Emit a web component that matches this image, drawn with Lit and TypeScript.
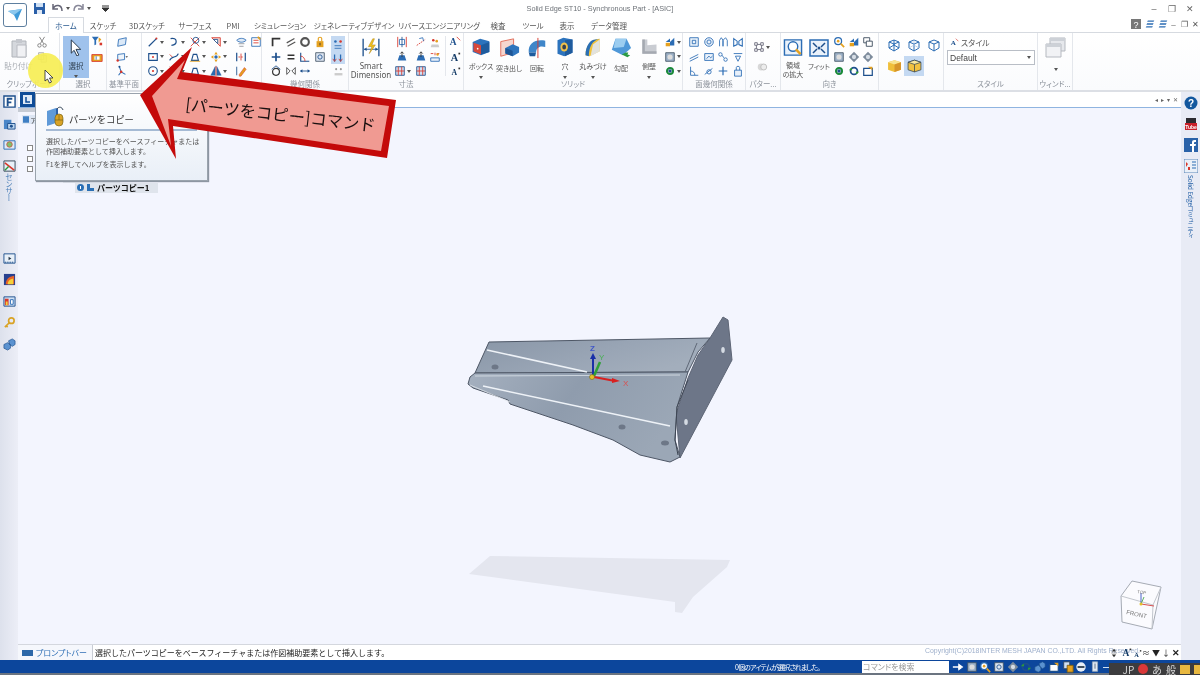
import { LitElement, html, css, svg } from "lit";
import { customElement } from "lit/decorators.js";

const B = "#2b6cb4";
const D = "#1d4f8c";
const O = "#e5a11f";
const G = "#8d939c";
const R = "#d8382c";

// 14x14 glyphs for the small ribbon buttons
const I: Record<string, any> = {
  cut: svg`<path d="M4 1l5 8M10 1L5 9" stroke="#777" fill="none"/><circle cx="4" cy="11" r="2" fill="none" stroke="#777"/><circle cx="10" cy="11" r="2" fill="none" stroke="#777"/>`,
  copy: svg`<path d="M3 2h6v8H3zM6 5h6v8H6z" fill="#eee" stroke="#aaa"/>`,
  filter: svg`<path d="M1 2h8L6 6v5L4 12V6z" fill="${B}"/><path d="M9 3l3 2-3 4z" fill="${O}"/><path d="M10 9h3v3h-3z" fill="${R}"/>`,
  select2: svg`<path d="M1 3h12v8H1z" fill="${O}" stroke="${R}"/><path d="M4 5h6v4H4z" fill="#fff"/><path d="M6 5v4" stroke="${B}"/>`,
  plane1: svg`<path d="M3 4l9-2-1 8-9 2z" fill="#dbe9f8" stroke="${B}"/>`,
  plane2: svg`<path d="M2 4l8-1v7l-8 1z" fill="#eef4fb" stroke="${B}"/><circle cx="2" cy="11" r="1.4" fill="${R}"/><path d="M11 6l3 0-1.500 2z" fill="#444"/>`,
  plane3: svg`<path d="M4 2l2 6 5 3M6 8L3 12" stroke="${B}" fill="none" stroke-width="1.200"/><circle cx="6" cy="8" r="1.500" fill="${R}"/><circle cx="4" cy="2" r="1.200" fill="${D}"/>`,
  line: svg`<path d="M2 12L11 3" stroke="${D}" stroke-width="1.400"/><circle cx="11" cy="3" r="1.200" fill="${R}"/>`,
  arc: svg`<path d="M3 3c8-2 9 7 1 8" fill="none" stroke="${D}" stroke-width="1.400"/>`,
  fillet: svg`<path d="M2 11c2-6 8-2 10-8" fill="none" stroke="${D}" stroke-width="1.400"/><path d="M2 4l3 3" stroke="${R}"/>`,
  rect: svg`<path d="M2 3h10v8H2z" fill="none" stroke="${D}" stroke-width="1.300"/><circle cx="7" cy="7" r="1.200" fill="${R}"/>`,
  circle: svg`<circle cx="7" cy="7" r="5" fill="none" stroke="${D}" stroke-width="1.300"/><circle cx="7" cy="7" r="1.300" fill="${R}"/>`,
  trim: svg`<path d="M2 2l10 10M12 2L2 12" stroke="${R}"/><circle cx="8" cy="5" r="3.500" fill="none" stroke="${D}"/>`,
  project: svg`<path d="M3 11h8L9 4H5z" fill="none" stroke="${D}" stroke-width="1.300"/><path d="M1 12h12" stroke="${O}"/>`,
  corner: svg`<path d="M2 2h10v10z" fill="#f6d9d2" stroke="${R}"/><path d="M4 4h5v5z" fill="#fff" stroke="${D}"/>`,
  move: svg`<path d="M7 1l2 3H5zM7 13l2-3H5zM1 7l3-2v4zM13 7l-3-2v4z" fill="${O}"/><circle cx="7" cy="7" r="2" fill="${B}"/>`,
  mirror: svg`<path d="M6 2v10L1 12zM8 2v10l5 0z" fill="${B}" stroke="${D}" stroke-width=".5"/><path d="M7 1v12" stroke="${R}"/>`,
  eye: svg`<path d="M2 5c3-3 8-3 11 0-3 3-8 3-11 0z" fill="#dfeaf6" stroke="${B}"/><path d="M4 9h7M5 12h5" stroke="${G}"/>`,
  grid: svg`<path d="M2 2h10v10H2z" fill="#fff" stroke="${B}"/><path d="M4 5h6M4 8h6" stroke="${R}"/><path d="M9 1l3 3" stroke="${O}" stroke-width="2"/>`,
  dim: svg`<path d="M2 2v10M12 2v10" stroke="${D}" stroke-width="1.400"/><path d="M4 7h6" stroke="${R}" stroke-dasharray="2 1"/><path d="M7 3v8" stroke="${R}"/>`,
  pencil: svg`<path d="M2 2v10" stroke="${D}"/><path d="M5 11l6-8 2 2-6 8H5z" fill="${O}" stroke="${R}" stroke-width=".6"/>`,
  perp: svg`<path d="M3 12V3h9" fill="none" stroke="#333" stroke-width="2"/>`,
  para: svg`<path d="M2 8l9-5M3 12l9-5" stroke="#555" stroke-width="1.400"/>`,
  ring: svg`<circle cx="7" cy="7" r="4.500" fill="none" stroke="#555" stroke-width="2.400"/>`,
  lock: svg`<path d="M3 6h8v7H3z" fill="${O}"/><path d="M5 6V3c0-2 4-2 4 0v3" fill="none" stroke="${O}" stroke-width="1.300"/><path d="M7 8v3" stroke="#333"/>`,
  cross: svg`<path d="M7 2v10M2 7h10" stroke="${D}" stroke-width="2"/>`,
  equal: svg`<path d="M3 5h8M3 9h8" stroke="#333" stroke-width="1.800"/>`,
  ang: svg`<path d="M2 2v10h10" fill="none" stroke="${D}" stroke-width="1.300"/><path d="M2 6c3 0 5 3 5 6" fill="none" stroke="${R}"/>`,
  tgt: svg`<path d="M2 2h10v10H2z" fill="#dde6f2" stroke="#456"/><circle cx="7" cy="7" r="2.500" fill="none" stroke="${D}"/>`,
  tan: svg`<circle cx="7" cy="8" r="4" fill="none" stroke="#333" stroke-width="1.400"/><path d="M2 5l5-4 5 4" fill="none" stroke="${D}"/>`,
  sym: svg`<path d="M2 3l4 4-4 4zM12 3L8 7l4 4z" fill="none" stroke="#444"/>`,
  dist: svg`<path d="M2 7h10" stroke="${D}"/><path d="M1 7l3-2v4zM13 7l-3-2v4z" fill="${D}"/>`,
  rel1: svg`<circle cx="4" cy="4" r="1.500" fill="${B}"/><circle cx="10" cy="4" r="1.500" fill="${R}"/><path d="M3 9l8 0M3 12l8 0" stroke="${B}"/>`,
  rel2: svg`<path d="M3 3v8M10 3v8" stroke="${B}" stroke-width="1.500"/><path d="M1 8l2 3 2-3M8 8l2 3 2-3" fill="none" stroke="${R}"/>`,
  rel3: svg`<path d="M3 10h8l1 3H2z" fill="#ccc"/><circle cx="5" cy="5" r="1.500" fill="${R}"/><circle cx="9" cy="6" r="1.500" fill="${O}"/>`,
  relG: svg`<circle cx="4" cy="4" r="1.300" fill="#999"/><circle cx="10" cy="4" r="1.300" fill="#999"/><path d="M2 9h10v3H2z" fill="#ccc"/>`,
  dimA: svg`<path d="M2 1v12M12 1v12" stroke="${R}"/><path d="M4 4h6v6H4z" fill="none" stroke="${B}"/><path d="M7 1v12" stroke="${D}"/>`,
  dimB: svg`<path d="M2 11l10-7" stroke="${R}" stroke-dasharray="2 1"/><path d="M5 3l4-1 1 4" fill="none" stroke="${B}"/>`,
  dimC: svg`<path d="M2 3h3M9 3h3M7 2v3" stroke="${R}"/><path d="M2 8h10v4H2z" fill="#e8f0fa" stroke="${B}"/><circle cx="10" cy="4" r="1.400" fill="${O}"/>`,
  dimD: svg`<path d="M2 11h10l-2-6H4z" fill="${B}"/><path d="M7 1v6" stroke="#333"/><path d="M5 3l2-2 2 2" fill="none" stroke="#333"/>`,
  dimE: svg`<path d="M2 2h10v10H2z" fill="#cfe0f4" stroke="${D}"/><path d="M5 2v10M9 2v10M2 7h10" stroke="${R}"/>`,
  txA: svg`<text x="1" y="11" font-size="11" font-weight="700" font-family="Liberation Serif" fill="${D}">A</text><path d="M9 1l4 4" stroke="${R}"/>`,
  txB: svg`<text x="2" y="12" font-size="12" font-weight="700" font-family="Liberation Serif" fill="#123a66">A</text><path d="M11 2h2v2h-2z" fill="#333"/>`,
  txC: svg`<text x="3" y="12" font-size="9" font-weight="700" font-family="Liberation Serif" fill="#123a66">A</text><path d="M11 3h2v2h-2z" fill="#333"/>`,
  fa: svg`<path d="M2 2h10v10H2z" fill="#eaf2fb" stroke="${B}"/><path d="M5 5h4v4H5z" fill="none" stroke="${B}"/>`,
  fb: svg`<circle cx="7" cy="7" r="5" fill="#e8f0fa" stroke="${B}"/><circle cx="7" cy="7" r="2.400" fill="none" stroke="${B}"/>`,
  fc: svg`<path d="M3 12V5l2-3 2 3v7M7 12V5l3-3 2 3v7" fill="none" stroke="${B}"/>`,
  fd: svg`<path d="M2 3l4 3v4l-4 2zM12 3L8 6v4l4 2z" fill="none" stroke="${B}" stroke-width="1.200"/>`,
  fe: svg`<path d="M2 9l10-5M2 12l10-5" stroke="${B}"/>`,
  ff: svg`<path d="M2 3h10v8H2z" fill="#eaf2fb" stroke="${B}"/><path d="M4 9l3-3 2 2 2-2" fill="none" stroke="${B}"/>`,
  fg: svg`<circle cx="4" cy="4" r="2" fill="none" stroke="${B}"/><circle cx="10" cy="10" r="2" fill="none" stroke="${B}"/><path d="M6 5l2 3" stroke="${B}"/>`,
  fh: svg`<path d="M2 3h10M4 6h6l-3 6z" fill="none" stroke="${B}"/>`,
  fi: svg`<path d="M3 2v10h9" fill="none" stroke="${B}"/><path d="M3 7c3 0 5 2 5 5" fill="none" stroke="${B}"/>`,
  fj: svg`<path d="M2 11l9-7" stroke="${B}"/><circle cx="7" cy="8" r="2.500" fill="none" stroke="${B}"/>`,
  fk: svg`<path d="M7 2v10M2 7h10" stroke="${B}" stroke-width="1.400"/>`,
  fl: svg`<path d="M3 6h8v7H3z" fill="#e8f0fa" stroke="${B}"/><path d="M5 6V3c0-2 4-2 4 0v3" fill="none" stroke="${B}"/>`,
  pat: svg`<path d="M2 2h3v3H2zM9 2h3v3H9zM2 9h3v3H2zM9 9h3v3H9z" fill="none" stroke="#667"/><path d="M5 4h4M4 5v4M10 5v4M5 10h4" stroke="#667"/>`,
  patB: svg`<circle cx="6" cy="7" r="4" fill="#d8d8d8"/><circle cx="9" cy="7" r="3.500" fill="#ececec" stroke="#bbb"/>`,
  zoom: svg`<circle cx="6" cy="6" r="4" fill="#fff" stroke="${B}" stroke-width="1.500"/><path d="M9 9l4 4" stroke="${O}" stroke-width="2"/><circle cx="6" cy="6" r="1.500" fill="${O}"/>`,
  shade: svg`<path d="M2 7l5-4v4zM7 7l5-5v9H7z" fill="${B}"/><path d="M2 8h5v4H2z" fill="${O}"/>`,
  windows: svg`<path d="M2 2h7v6H2z" fill="#fff" stroke="#345"/><path d="M5 6h7v6H5z" fill="#fff" stroke="#345"/>`,
  view: svg`<path d="M2 2h10v10H2z" fill="#9fb3c9" stroke="#456"/><circle cx="7" cy="7" r="3" fill="#ddd"/>`,
  spin: svg`<path d="M3 7a4 4 0 0 1 8 0 4 4 0 0 1-8 0" fill="none" stroke="${D}" stroke-width="2"/><path d="M1 6l3-3 1 3zM13 8l-3 3-1-3z" fill="#2e9a3a"/>`,
  gear: svg`<path d="M7 1l6 6-6 6-6-6z" fill="#7d8b9b"/><circle cx="7" cy="7" r="2.500" fill="#d6dde5"/>`,
  rotate: svg`<circle cx="7" cy="7" r="3.500" fill="none" stroke="#1a8a3a" stroke-width="2.400"/><circle cx="7" cy="7" r="2" fill="${D}"/>`,
  flag: svg`<path d="M2 4h10v8H2z" fill="#fff" stroke="${D}" stroke-width="1.400"/><path d="M7 2l5 0 0 4z" fill="${O}"/>`,
  cubeA: svg`<path d="M2 4l5-2 5 2v6l-5 3-5-3zM2 4l5 2 5-2M7 6v7M7 2v5M2 10l5-3 5 3" fill="none" stroke="${B}"/>`,
  cubeB: svg`<path d="M2 4l5-2 5 2v6l-5 3-5-3zM2 4l5 2 5-2M7 6v7" fill="none" stroke="${B}"/><path d="M2 10l5-3 5 3M7 2v5" fill="none" stroke="#a9c3e2" stroke-width=".7"/>`,
  cubeC: svg`<path d="M2 4l5-2 5 2v6l-5 3-5-3zM2 4l5 2 5-2M7 6v7" fill="none" stroke="${B}"/>`,
  cubeD: svg`<path d="M1 4l6-2 6 2v7l-6 2-6-2z" fill="#f0bf3a"/><path d="M1 4l6 2 6-2-6-2z" fill="#f8e390"/><path d="M7 6l6-2v7l-6 2z" fill="#d7952a"/>`,
  cubeE: svg`<path d="M1 4l6-2 6 2v7l-6 2-6-2z" fill="#f2c241" stroke="#345" stroke-width=".7"/><path d="M1 4l6 2 6-2-6-2z" fill="#f9e89b" stroke="#345" stroke-width=".7"/><path d="M7 6v7" stroke="#345" stroke-width=".7"/>`,
  stack: svg`<path d="M4 2h9l-1 2H3zM3 6h9l-1 2H2zM2 10h9l-1 2H1z" fill="${B}"/>`,
  hF: svg`<path d="M1 1h12v12H1z" fill="#fff" stroke="${D}" stroke-width="1.500"/><path d="M4 3h6v2H6v2h3v2H6v3H4z" fill="${D}"/>`,
  hB: svg`<path d="M1 3h8v10H1z" fill="#4a86c8"/><path d="M5 7h8v6H5z" fill="#bcd6f0" stroke="${D}"/><circle cx="9" cy="10" r="1.600" fill="${D}"/>`,
  hC: svg`<path d="M1 3h12v9H1z" fill="#dfeaf6" stroke="${B}"/><circle cx="7" cy="7" r="3" fill="#7fbf6f" stroke="${R}" stroke-width=".7"/>`,
  hD: svg`<path d="M1 1h12v11H1z" fill="#e8f0f8" stroke="#345"/><path d="M2 3l10 8" stroke="${R}" stroke-width="1.800"/><path d="M2 11l4-4" stroke="#2e9a3a" stroke-width="1.500"/>`,
  hE: svg`<path d="M1 2h12v10H1z" fill="#e8f0f8" stroke="${D}"/><path d="M6 5l3 2-3 2z" fill="#234"/><path d="M2 11h10" stroke="${D}" stroke-dasharray="1.500 1"/>`,
  hF2: svg`<path d="M1 1h12v12H1z" fill="#27408f"/><path d="M3 12c0-5 3-8 9-9v9z" fill="#e8622a"/><path d="M5 12c0-3 2-5 6-6v6z" fill="#f4d13a"/>`,
  hG: svg`<path d="M1 2h12v10H1z" fill="#cfe0f4" stroke="${D}"/><path d="M2 4h4v7H2z" fill="#d8382c"/><path d="M3 7h2v4H3z" fill="#f4d13a"/><path d="M8 5h3v5H8z" fill="#fff" stroke="${B}"/>`,
  hKey: svg`<circle cx="9" cy="5" r="3" fill="none" stroke="#d9a326" stroke-width="1.800"/><path d="M7 7l-5 5M3 10l2 2" stroke="#d9a326" stroke-width="1.800"/>`,
  hParts: svg`<path d="M1 7l4-2 3 2v4l-3 2-4-2zM6 3l4-2 3 2v4l-3 2-3-2z" fill="#5a92d0" stroke="${D}" stroke-width=".7"/>`,
  help: svg`<circle cx="7" cy="7" r="6.500" fill="#12579e"/><text x="7" y="10.500" text-anchor="middle" font-size="10" font-weight="700" font-family="Liberation Sans" fill="#fff">?</text>`,
  yt: svg`<path d="M1 6h12v7H1z" fill="#c8202a"/><path d="M2 1h10v5H2z" fill="#2b2b30"/><text x="7" y="11.500" text-anchor="middle" font-size="5" font-weight="700" font-family="Liberation Sans" fill="#fff">Tube</text>`,
  fbk: svg`<path d="M0 0h14v14H0z" fill="#2a62a8"/><path d="M8 14V8H6V6h2V4c0-2 2-2 4-2v2c-2 0-2 0-2 2h2l-.4 2H10v6z" fill="#fff"/>`,
  comm: svg`<path d="M0 0h14v14H0z" fill="#eaf0f8" stroke="#5b86b8"/><path d="M2 3l2 2-2 3zM4 8h2v3H4z" fill="${R}"/><path d="M8 3h4M8 6h4M8 9h4" stroke="${B}"/>`,
  rarrow: svg`<path d="M1 7h8M8 4l4 3-4 3z" stroke="#fff" fill="#fff" stroke-width="1.500"/>`,
  minus: svg`<circle cx="7" cy="7" r="5.500" fill="#e8eef6"/><path d="M3 7h8" stroke="#234" stroke-width="2"/>`,
  docs: svg`<path d="M2 1h7v8H2z" fill="#cfe0f4" stroke="#345"/><path d="M6 5h7v8H6z" fill="${O}" stroke="#7a5c10"/>`,
  slider: svg`<path d="M4 1h6v11H4z" fill="#dfe8f4" stroke="#9ab"/><path d="M7 3v6" stroke="#567"/>`,
  updown: svg`<path d="M7 1l3 4H4zM7 13l3-4H4z" fill="#333"/><path d="M3 7h8" stroke="#888"/>`,
};

const icon = (n: string, s = 12) =>
  html`<svg class="ic" width=${s} height=${s} viewBox="0 0 14 14">${I[n]}</svg>`;

const caret = html`<i class="caret"></i>`;

type Big = { label: string; lines?: number; draw: any };

const SOLIDS: Big[] = [
  { label: "ボックス", lines: 2, draw: svg`<path d="M2 6l9-4 11 3v13l-10 4-10-4z" fill="#2c73bd"/><path d="M3 7l9 3v11l-9-4z" fill="#d6483c"/><path d="M12 10l10-4v12l-10 3z" fill="#1f5b9d"/><circle cx="8" cy="14" r="1" fill="#ffe"/>` },
  { label: "突き出し", draw: svg`<path d="M3 5l14-3v15L3 21z" fill="#f6d6cf" stroke="#e06a58"/><path d="M8 12l8-4 7 3v6l-7 4-8-3z" fill="#2f75bd"/><path d="M8 12l8 3v6l-8-3z" fill="#1e5696"/>` },
  { label: "回転", draw: svg`<path d="M3 17C2 7 10 2 21 4v7c-6-2-10 1-10 6z" fill="#3f86c9"/><path d="M3 17h8l-1 4H4z" fill="#1f5b9d"/><path d="M13 1v22" stroke="#d8382c"/>` },
  { label: "穴", lines: 2, draw: svg`<path d="M3 4l7-3 11 2v16l-10 4-8-3z" fill="#2c73bd"/><path d="M12 4l9-1v16l-9 4z" fill="#1f5b9d"/><ellipse cx="11" cy="12" rx="4.500" ry="5.500" fill="#f0c14a"/><ellipse cx="11" cy="12" rx="2.300" ry="3" fill="#35404f"/>` },
  { label: "丸みづけ", lines: 2, draw: svg`<path d="M3 22C3 10 9 3 20 2v15L8 23z" fill="#f0c23c"/><path d="M3 22C3 10 9 3 15 3l5-1C11 4 7 12 7 23z" fill="#2a6fb5"/><path d="M12 9l8-6v14l-11 6z" fill="#e0e6ee" fill-opacity=".9"/>` },
  { label: "勾配", draw: svg`<path d="M6 2h12l5 10-9 8-12-6z" fill="#4f98d8"/><path d="M6 2h12l-3 9-11 1z" fill="#9ccdf0"/><path d="M13 19l6 3 3-2-3-1 1-2-3 0z" fill="#2b9a45"/>` },
  { label: "側壁", lines: 2, draw: svg`<path d="M4 3h6v7l11-1v11H4z" fill="#c9ccd2"/><path d="M4 3h3v17H4zM4 17h17v3H4z" fill="#a5a9b1"/>` },
];

@customElement("app-root")
export class AppRoot extends LitElement {
  static styles = css`
    :host {
      display: block;
      width: 1200px;
      height: 675px;
      font-family: "Noto Sans CJK JP", "Noto Sans", sans-serif;
      font-feature-settings: "palt";
      color: #444;
      --blue: #0c469c;
    }

    * {
      box-sizing: border-box;
    }

    .app {
      position: relative;
      width: 1200px;
      height: 675px;
      overflow: hidden;
      display: flex;
      flex-direction: column;
      background: #fff;
      filter: blur(0.35px);
    }

    .ic {
      display: block;
      flex: none;
    }

    .caret {
      display: block;
      width: 0;
      height: 0;
      border: 2px solid transparent;
      border-top: 3px solid #555;
      border-bottom: 0;
      flex: none;
    }

    /* header */
    .header {
      display: flex;
      height: 33px;
      flex: none;
      border-bottom: 1px solid #d6dae0;
    }

    .appbtn {
      width: 24px;
      height: 24px;
      margin: 3px 7px 0 3px;
      border: 1px solid #5e7f9f;
      border-radius: 3px;
      background: #fff;
      display: flex;
      align-items: center;
      justify-content: center;
      flex: none;
    }

    .headright {
      flex: 1;
      display: flex;
      flex-direction: column;
      min-width: 0;
    }

    .titlerow {
      height: 16px;
      display: flex;
      align-items: center;
    }

    .quick {
      display: flex;
      align-items: center;
      width: 300px;
    }

    .title {
      width: 532px;
      text-align: center;
      font: 7.300px "Liberation Sans", sans-serif;
      color: #6d7278;
      padding-top: 1px;
    }

    .winctl {
      margin-left: auto;
      display: flex;
      padding: 2px 1px 0 0;
      font: 9px "Liberation Sans", sans-serif;
      color: #666;
    }

    .winctl span {
      width: 18px;
      text-align: center;
    }

    .tabrow {
      flex: 1;
      display: flex;
      align-items: flex-end;
      padding-left: 14px;
    }

    .tab {
      height: 16px;
      display: flex;
      align-items: center;
      justify-content: center;
      font-size: 7.5px;
      color: #555;
      white-space: nowrap;
      margin-bottom: -1px;
      flex: none;
    }

    .tab.on {
      background: #fff;
      border: 1px solid #d6dae0;
      border-bottom: 0;
      color: #2a5a90;
      margin-right: 4px;
    }

    .rightctl {
      margin-left: auto;
      display: flex;
      align-items: center;
      height: 14px;
      margin-bottom: 1px;
      font: 8px "Liberation Sans", sans-serif;
      color: #555;
    }

    .rightctl span {
      width: 11px;
      text-align: center;
    }

    /* ribbon */
    .ribbon {
      display: flex;
      height: 59px;
      flex: none;
      background: linear-gradient(#fff, #fafbfd);
      border-bottom: 2px solid #dcdfe5;
    }

    .group {
      flex: none;
      display: flex;
      flex-direction: column;
      border-right: 1px solid #e4e7ec;
    }

    .gbody {
      flex: 1;
      display: flex;
      min-height: 0;
    }

    .glabel {
      height: 11px;
      text-align: center;
      font-size: 7.5px;
      line-height: 10px;
      color: #8c929b;
      white-space: nowrap;
      overflow: hidden;
    }

    .col {
      display: flex;
      flex-direction: column;
      align-items: center;
      padding-top: 3px;
      gap: 3px;
    }

    .cell {
      display: flex;
      align-items: center;
      gap: 1px;
      height: 12px;
    }

    .small {
      display: grid;
      grid-auto-flow: column;
      grid-template-rows: repeat(3, 14.5px);
      padding-top: 2px;
      justify-items: center;
      align-items: center;
    }

    .bigbtn {
      display: flex;
      flex-direction: column;
      align-items: center;
      font-size: 7.5px;
      line-height: 9px;
      text-align: center;
      color: #555;
      white-space: nowrap;
      flex: none;
    }

    .sel {
      width: 26px;
      height: 42px;
      margin: 3px 2px 0 3px;
      background: #9fc2ec;
      color: #345;
      padding-top: 3px;
      gap: 5px;
    }

    .paste {
      color: #a9adb3;
      width: 35px;
      margin-left: 1px;
      padding-top: 5px;
      gap: 3px;
    }

    .solid {
      width: 28px;
      padding-top: 4px;
      gap: 5px;
      font-size: 7px;
    }

    .sd {
      font: 8px "Noto Sans", sans-serif;
      line-height: 9px;
      width: 44px;
      padding-top: 4px;
      gap: 3px;
      color: #555;
    }

    .wide {
      width: 26px;
      padding-top: 5px;
      gap: 4px;
      line-height: 9px;
      font-size: 7px;
    }

    .gapL {
      margin-left: -1px;
    }

    .sel-rel {
      background: #c4d9f2;
      margin: 3px 0 0 4px;
      padding: 2px 1px 0;
      gap: 2px;
      height: 28px;
    }

    .rel-stack {
      display: flex;
      flex-direction: column;
      align-items: center;
    }

    .sep {
      width: 1px;
      background: #e4e7ec;
      margin: 3px 2px 3px 3px;
      flex: none;
    }

    .cubes {
      display: grid;
      grid-template-columns: repeat(3, 20px);
      grid-template-rows: 21px 21px;
      padding: 1px 0 0 5px;
      place-items: center;
    }

    .cube-on {
      background: #c4d9f2;
      width: 20px;
      height: 20px;
      display: flex;
      align-items: center;
      justify-content: center;
    }

    .stylepane {
      padding: 4px 0 0 3px;
      display: flex;
      flex-direction: column;
      gap: 2px;
      font-size: 8px;
      color: #555;
    }

    .stylehead {
      display: flex;
      align-items: center;
      gap: 2px;
      padding-left: 3px;
    }

    .combo {
      width: 88px;
      height: 15px;
      border: 1px solid #b9bec6;
      background: #fff;
      display: flex;
      align-items: center;
      justify-content: space-between;
      padding: 0 3px 0 2px;
      font: 8.500px "Liberation Sans", sans-serif;
      color: #444;
    }

    /* body */
    .body {
      flex: 1;
      display: flex;
      min-height: 0;
    }

    .lrail,
    .rrail {
      flex: none;
      display: flex;
      flex-direction: column;
      align-items: center;
      background: #e8ebf5;
    }

    .lrail {
      width: 18px;
      padding-top: 3px;
      gap: 8.500px;
      background: linear-gradient(90deg, #dde1ec, #eceef7);
    }

    .vtext {
      writing-mode: vertical-rl;
      font-size: 7.500px;
      font-feature-settings: "vpal";
      color: #4b7fb8;
      margin-top: -7px;
      white-space: nowrap;
    }

    .railgap {
      height: 33px;
    }

    .rrail {
      width: 19px;
      padding-top: 4px;
      gap: 7px;
    }

    .rrail .vtext {
      color: #2460a6;
      margin-top: -5px;
      font-size: 6.300px;
    }

    .center {
      flex: 1;
      display: flex;
      flex-direction: column;
      min-width: 0;
    }

    .strip {
      height: 16px;
      flex: none;
      display: flex;
      align-items: flex-end;
      padding: 0 2px;
      border-bottom: 1px solid #8fb4e0;
      background: #fff;
    }

    .paneltab {
      width: 15px;
      height: 15px;
      background: #0f4c97;
      display: flex;
      align-items: center;
      justify-content: center;
    }

    .panelctl {
      margin-left: auto;
      align-self: center;
      display: flex;
      gap: 3px;
      font: 6px "Liberation Sans", sans-serif;
      color: #666;
      padding-right: 1px;
    }

    .viewport {
      flex: 1;
      position: relative;
      background: #f3f5fe;
      border-bottom: 1px solid #d4d7de;
      min-height: 0;
    }

    .panelfoot {
      width: 17px;
      height: 4px;
      background: #c6cbd4;
      margin-bottom: 3px;
    }

    .treetab {
      width: 15px;
      height: 9px;
      margin-left: 4px;
      background: #dde6f3;
      display: flex;
      align-items: center;
      gap: 1px;
      padding-left: 1px;
      font-size: 7px;
      margin-bottom: 21px;
    }

    .exp {
      width: 6px;
      height: 6px;
      border: 1px solid #888;
      background: #fff;
      margin: 0 0 4.500px 9px;
    }

    .treerow {
      display: flex;
      align-items: center;
      gap: 2px;
      height: 10px;
      background: #dfe4ec;
      font-size: 8px;
      font-feature-settings: normal;
      font-weight: 700;
      color: #111;
      white-space: nowrap;
      padding: 0 2px;
    }

    .r1 {
      width: 57px;
      margin: -2px 0 0 45px;
      height: 8px;
    }

    .r2 {
      width: 83px;
      margin: 0 0 0 57px;
      gap: 3px;
    }

    .model {
      position: absolute;
      left: 0;
      top: 0;
    }

    .prompt {
      height: 15px;
      flex: none;
      display: flex;
      align-items: center;
      background: #f5f7fc;
    }

    .plabel {
      width: 74px;
      padding-left: 4px;
      display: flex;
      align-items: center;
      gap: 3px;
      font-size: 8px;
      color: #2f6fb5;
      white-space: nowrap;
    }

    .kbd {
      width: 11px;
      height: 6px;
      background: #2d68a8;
      flex: none;
    }

    .pinput {
      flex: 1;
      height: 100%;
      background: #fff;
      border-left: 1px solid #c8ccd4;
      display: flex;
      align-items: center;
      padding-left: 2px;
      font-size: 8px;
      font-feature-settings: normal;
      color: #222;
      white-space: nowrap;
    }

    .copy {
      margin-left: auto;
      font: 6.900px "Liberation Sans", sans-serif;
      color: #9fb0cc;
      margin-right: -33px;
      padding-bottom: 4px;
    }

    .pctl {
      display: flex;
      align-items: center;
      position: relative;
    }

    .pctl span {
      width: 10px;
      text-align: center;
      font-size: 8px;
      display: flex;
      justify-content: center;
    }

    .status {
      height: 15px;
      flex: none;
      background: var(--blue);
      border-bottom: 2px solid #6b7480;
      display: flex;
      align-items: flex-start;
      color: #fff;
      font-size: 7px;
      white-space: nowrap;
      padding-top: 1px;
    }

    .smsg {
      margin-left: 735px;
      width: 127px;
      flex: none;
      line-height: 12px;
      letter-spacing: -0.9px;
    }

    .search {
      width: 87px;
      height: 12px;
      flex: none;
      background: #fff;
      color: #999;
      padding-left: 1px;
      line-height: 12px;
      font-size: 8px;
    }

    .sicons {
      display: flex;
      gap: 1.700px;
      padding-left: 3px;
      align-items: center;
      flex: none;
    }

    .sline {
      width: 6px;
      height: 1px;
      background: #cfe0f4;
    }

    .task {
      margin-left: auto;
      align-self: flex-end;
      width: 92px;
      height: 12px;
      margin-bottom: -2px;
      background: #3c3c3e;
      display: flex;
      align-items: center;
      gap: 4px;
      padding-left: 14px;
      font-size: 10px;
      color: #d8d8d8;
      overflow: hidden;
      flex: none;
    }

    .reddot {
      width: 10px;
      height: 10px;
      border-radius: 50%;
      background: #d93838;
      flex: none;
    }

    .tray {
      width: 10px;
      height: 9px;
      background: #e8b840;
      flex: none;
    }

    /* overlays */
    .tip {
      position: absolute;
      left: 35px;
      top: 93px;
      width: 173px;
      height: 88px;
      background: linear-gradient(#fff, #e9eff7);
      border: 1px solid #9aa3ad;
      box-shadow: 1px 1px 1px #8d96a2;
      padding: 10px 10px 0 10px;
      color: #555;
      font-size: 7px;
      line-height: 10px;
      font-feature-settings: normal;
    }

    .tiphead {
      display: flex;
      align-items: flex-end;
      gap: 3px;
      height: 27px;
      font-size: 9.300px;
      line-height: 14px;
      color: #333;
      border-bottom: 2px solid #a5bad4;
      margin-bottom: 5px;
    }

    .tiphead span {
      padding-bottom: 3px;
    }

    .tip p {
      margin: 0 0 3px;
      white-space: nowrap;
    }

    .hl {
      position: absolute;
      left: 28px;
      top: 53px;
      width: 35px;
      height: 35px;
      border-radius: 50%;
      background: #f6ee55;
      opacity: 0.92;
    }

    .cursor {
      position: absolute;
      left: 44px;
      top: 69px;
    }

    .arrow {
      position: absolute;
      left: 130px;
      top: 40px;
    }

    .arrow text {
      font-family: "Noto Sans CJK JP", sans-serif;
      font-size: 16.400px;
      fill: #1a1010;
      font-feature-settings: normal;
    }
  `;

  group(w: number, label: string, body: unknown) {
    return html`<div class="group" style="width:${w}px">
      <div class="gbody">${body}</div>
      <div class="glabel">${label}</div>
    </div>`;
  }

  small(names: string[], cols: number[], pad = 0) {
    return html`<div
      class="small"
      style="grid-template-columns:${cols.map(c => c + "px").join(" ")};margin-left:${pad}px"
    >
      ${names.map(n =>
        n.endsWith("*")
          ? html`<div class="cell">${icon(n.slice(0, -1))}${caret}</div>`
          : n ? icon(n) : html`<span></span>`
      )}
    </div>`;
  }

  renderRibbon() {
    return html`<div class="ribbon">
      ${this.group(60, "クリップボード", html`
        <div class="bigbtn paste">
          <svg width="20" height="20" viewBox="0 0 20 20"><path d="M3 3h14v16H3z" fill="#d5d8dd" stroke="#b0b4ba"/><path d="M7 1h6v4H7z" fill="#c5c8ce"/><path d="M8 7h9v12H8z" fill="#f0f1f4" stroke="#b8bbc1"/></svg>
          貼り付け
        </div>
        <div class="col">${icon("cut")}${icon("copy")}</div>
      `)}
      ${this.group(47, "選択", html`
        <div class="bigbtn sel">
          <svg width="14" height="18" viewBox="0 0 14 18"><path d="M2 1l10 10H7l3 6-2 1-3-6-3 3z" fill="#fff" stroke="#234"/></svg>
          <span>選択</span>${caret}
        </div>
        <div class="col" style="gap:5px;padding-top:2px">${icon("filter")}${icon("select2")}</div>
      `)}
      ${this.group(35, "基準平面", this.small(["plane1", "plane2", "plane3"], [16], 7))}
      ${this.group(120, "", html`
        ${this.small(["line*", "rect*", "circle*", "arc*", "fillet*", "trim*", "trim*", "project*", "project*", "corner*", "move*", "mirror*"], [21, 21, 21, 21], 3)}
        ${this.small(["eye", "dim", "pencil", "grid", "", ""], [15, 15], 4)}
      `)}
      ${this.group(87, "幾何関係", html`
        ${this.small(["perp", "cross", "tan", "para", "equal", "sym", "ring", "ang", "dist", "lock", "tgt", ""], [14.5, 14.5, 14.5, 14.5], 7)}
        <div class="rel-stack">
          <div class="col sel-rel">${icon("rel1")}${icon("rel2")}</div>
          <div style="margin:2px 0 0 4px">${icon("relG", 11)}</div>
        </div>
      `)}
      ${this.group(115, "寸法", html`
        <div class="bigbtn sd">
          <svg width="22" height="22" viewBox="0 0 24 24"><path d="M3 2v20M21 2v20" stroke="#1d4f8c" stroke-width="1.500"/><path d="M4 14h16" stroke="#1d4f8c"/><path d="M4 14l3-2v4zM20 14l-3-2v4z" fill="#1d4f8c"/><path d="M14 2l-5 9h4l-3 8 7-10h-4l3-7z" fill="#f0c020" stroke="#a87c10" stroke-width=".5"/></svg>
          <span>Smart<br />Dimension</span>
        </div>
        ${this.small(["dimA", "dimD", "dimE*", "dimB", "dimD", "dimE", "rel3", "dimC", ""], [24, 14, 14], -3)}
        <div class="sep"></div>
        ${this.small(["txA", "txB", "txC"], [14], 0)}
      `)}
      ${this.group(219, "ソリッド", html`
        <div style="width:3px"></div>
        ${SOLIDS.map(b => html`<div class="bigbtn solid">
          <svg width="22" height="22" viewBox="0 0 24 24">${b.draw}</svg>
          <span>${b.label}</span>${b.lines ? caret : ""}
        </div>`)}
        ${this.small(["shade*", "view*", "rotate*"], [14], 2)}
      `)}
      ${this.group(63, "面幾何関係", this.small(["fa", "fe", "fi", "fb", "ff", "fj", "fc", "fg", "fk", "fd", "fh", "fl"], [14.5, 14.5, 14.5, 14.5], 4))}
      ${this.group(35, "パター...", html`
        <div class="col" style="padding:8px 0 0 7px;gap:8px"><div class="cell">${icon("pat")}${caret}</div>${icon("patB")}</div>
      `)}
      ${this.group(98, "向き", html`
        <div class="bigbtn wide gapL">
          <svg width="20" height="20" viewBox="0 0 20 20"><path d="M1 2h18v16H1z" fill="#eaf2fb" stroke="#2b6cb4" stroke-width="1.500"/><circle cx="10" cy="9" r="5" fill="#fff" stroke="#2b6cb4" stroke-width="1.500"/><path d="M13 12l5 5" stroke="#e5a11f" stroke-width="2.500"/></svg>
          <span>領域<br />の拡大</span>
        </div>
        <div class="bigbtn wide">
          <svg width="20" height="20" viewBox="0 0 20 20"><path d="M1 2h18v16H1z" fill="#eaf2fb" stroke="#2b6cb4" stroke-width="1.500"/><path d="M4 5l4 4M16 5l-4 4M4 15l4-4M16 15l-4-4" stroke="#1d4f8c" stroke-width="1.500"/><circle cx="10" cy="10" r="1.500" fill="#1d4f8c"/></svg>
          <span>フィット</span>
        </div>
        ${this.small(["zoom", "view", "rotate", "shade", "gear", "spin", "windows", "gear", "flag"], [14.5, 14.5, 14.5], 0)}
      `)}
      ${this.group(65, "", html`
        <div class="cubes">
          ${icon("cubeA", 14)}${icon("cubeB", 14)}${icon("cubeC", 14)}
          ${icon("cubeD", 15)}
          <div class="cube-on">${icon("cubeE", 15)}</div>
        </div>
      `)}
      ${this.group(94, "スタイル", html`
        <div class="stylepane">
          <div class="stylehead">${icon("txA", 9)}<span>スタイル</span></div>
          <div class="combo"><span>Default</span>${caret}</div>
        </div>
      `)}
      ${this.group(35, "ウィンド...", html`
        <div class="col" style="padding:4px 0 0 7px;gap:10px">
          <svg width="21" height="21" viewBox="0 0 21 21"><path d="M5 1h15v13H5z" fill="#e6e8ec" stroke="#b5b9c0"/><path d="M1 7h15v13H1z" fill="#f1f2f5" stroke="#b5b9c0"/><path d="M1 7h15v3H1zM5 1h15v3H5z" fill="#cdd1d7"/></svg>
          ${caret}
        </div>
      `)}
    </div>`;
  }

  renderModel() {
    return html`<svg class="model" width="1163" height="537" viewBox="18 108 1163 537">
      <defs>
        <linearGradient id="upper" x1="0" y1="0" x2="1" y2="0.5">
          <stop offset="0" stop-color="#8996a7" />
          <stop offset="0.6" stop-color="#99a5b5" />
          <stop offset="1" stop-color="#a3aebc" />
        </linearGradient>
        <linearGradient id="lower" x1="0" y1="0" x2="1" y2="0.3">
          <stop offset="0" stop-color="#a5b0bf" />
          <stop offset="0.5" stop-color="#8f9cad" />
          <stop offset="1" stop-color="#9ba7b6" />
        </linearGradient>
      </defs>
      <path d="M490 556L730 560L727 567L693 597L682 613L675 612L675 602L469 574Z" fill="#e4e6ef" />
      <path d="M723 317L728 320L732 360L680 458L676 414L688 378L698 355L710 338Z" fill="#6d7688" stroke="#5e6676" stroke-linejoin="round" />
      <path d="M489 342L710 338L698 352L688 372L475 373Z" fill="url(#upper)" stroke="#4e5766" stroke-linejoin="round" />
      <path d="M475 373L688 372L677 407L675 440L680 457L670 462L640 455L613 440L573 425L510 404L508 400L473 388L468 384L470 377Z" fill="url(#lower)" stroke="#4e5766" stroke-linejoin="round" />
      <path d="M697 343L690 360L685 372" stroke="#5f6877" fill="none" />
      <path d="M688 380L677 407L675 440L678 455" stroke="#3f4755" fill="none" />
      <path d="M487 350L587 372" stroke="#eef2f7" stroke-width="1.600" />
      <path d="M483 386L670 426" stroke="#eef2f7" stroke-width="1.500" />
      <path d="M475 376L680 375" stroke="#d4dbe3" stroke-width=".9" />
      <path d="M470 385L510 402" stroke="#dfe4ea" stroke-width=".8" />
      <ellipse cx="495" cy="367" rx="3.500" ry="2.500" fill="#6d7787" />
      <ellipse cx="622" cy="427" rx="3.500" ry="2.500" fill="#6d7787" />
      <ellipse cx="665" cy="443" rx="4" ry="2.500" fill="#6d7787" />
      <ellipse cx="723" cy="350" rx="1.800" ry="3" fill="#d5dbe3" />
      <ellipse cx="686" cy="422" rx="1.800" ry="3" fill="#d5dbe3" />
      <path d="M593 377V357" stroke="#1a2fa8" stroke-width="2" />
      <path d="M590 359l3-6 3 6z" fill="#1a2fa8" />
      <text x="590" y="351" font-size="8" font-weight="700" font-family="Liberation Sans" fill="#3f55c8">Z</text>
      <path d="M594 376L600 362" stroke="#2fa038" stroke-width="2.500" />
      <text x="599" y="360" font-size="8" font-family="Liberation Sans" fill="#46b050">Y</text>
      <path d="M594 377L615 381" stroke="#d82020" stroke-width="2" />
      <path d="M612 378l8 3-8 2z" fill="#d82020" />
      <text x="623" y="386" font-size="8" font-family="Liberation Sans" fill="#d85050">X</text>
      <circle cx="592" cy="377" r="2.500" fill="#e4c12a" stroke="#6b5a10" stroke-width=".5" />
      <path d="M1132 581L1161 587L1152 629L1122 622L1121 596Z" fill="#fbfbfe" stroke="#a6abb4" />
      <path d="M1121 596L1153 605L1161 587M1153 605L1152 629" fill="none" stroke="#c2c6cd" />
      <path d="M1141 604V593" stroke="#4a64c8" />
      <path d="M1141 604L1144 597" stroke="#5cb060" />
      <path d="M1141 604L1154 606" stroke="#d85050" />
      <circle cx="1141" cy="604" r="1.500" fill="#e4c12a" />
      <text x="1137" y="593" font-size="4.500" font-family="Liberation Sans" fill="#777" transform="rotate(10 1137 593)">TOP</text>
      <text x="1126" y="614" font-size="6" font-family="Liberation Sans" fill="#777" transform="rotate(12 1126 614)">FRONT</text>
    </svg>`;
  }

  render() {
    const tabs: [string, number][] = [
      ["スケッチ", 30], ["3Dスケッチ", 58], ["サーフェス", 38], ["PMI", 38],
      ["シミュレーション", 56], ["ジェネレーティブデザイン", 92], ["リバースエンジニアリング", 78],
      ["検査", 40], ["ツール", 30], ["表示", 38], ["データ管理", 46],
    ];
    return html`<div class="app">
      <div class="header">
        <div class="appbtn">
          <svg width="18" height="18" viewBox="0 0 18 18"><path d="M2 5l14-2-5 12-3-6z" fill="#3f9ad8" /><path d="M2 5l6 4 8-6z" fill="#8cc8ee" /></svg>
        </div>
        <div class="headright">
          <div class="titlerow">
            <div class="quick">
              <svg width="11" height="11" viewBox="0 0 11 11"><path d="M0 0h11v11H0z" fill="#2a5fa8" /><path d="M2 0h7v4H2z" fill="#cfe0f4" /><path d="M3 7h5v4H3z" fill="#dfe8f4" /></svg>
              <span style="width:6px"></span>
              <svg width="13" height="10" viewBox="0 0 13 10"><path d="M2 1v5h5M2 6c2-5 9-5 9 2" fill="none" stroke="#667" stroke-width="1.500" /></svg>
              <span style="width:2px"></span>${caret}<span style="width:2px"></span>
              <svg width="13" height="10" viewBox="0 0 13 10"><path d="M11 1v5H6M11 6c-2-5-9-5-9 2" fill="none" stroke="#889" stroke-width="1.500" /></svg>
              <span style="width:2px"></span>${caret}<span style="width:11px"></span>
              <svg width="7" height="7" viewBox="0 0 7 7"><path d="M0 1h7M0 3l3.500 3.500L7 3z" stroke="#333" fill="#333" /></svg>
            </div>
            <div class="title">Solid Edge ST10 - Synchronous Part - [ASIC]</div>
            <div class="winctl"><span>–</span><span>❐</span><span>✕</span></div>
          </div>
          <div class="tabrow">
            <div class="tab on" style="width:36px">ホーム</div>
            ${tabs.map(([t, w]) => html`<div class="tab" style="width:${w}px">${t}</div>`)}
            <div class="rightctl">
              <svg width="10" height="10" viewBox="0 0 10 10"><path d="M0 0h10v10H0z" fill="#777" /><text x="5" y="8.500" text-anchor="middle" font-size="9" fill="#fff" font-family="Liberation Sans">?</text></svg>
              <span style="width:4px"></span>${icon("stack", 10)}<span style="width:3px"></span>${icon("stack", 10)}
              <span>–</span><span>❐</span><span style="width:10px">✕</span>
            </div>
          </div>
        </div>
      </div>
      ${this.renderRibbon()}
      <div class="body">
        <div class="lrail">
          ${icon("hF", 13)}${icon("hB", 13)}${icon("hC", 13)}${icon("hD", 13)}
          <div class="vtext">センサー</div>
          <div class="railgap"></div>
          ${icon("hE", 13)}${icon("hF2", 13)}${icon("hG", 13)}${icon("hKey", 13)}${icon("hParts", 13)}
        </div>
        <div class="center">
          <div class="strip">
            <div class="paneltab"><svg width="11" height="11" viewBox="0 0 11 11"><path d="M1 1h9v9H1z" fill="#dfeaf6" /><path d="M4 3v5h4" fill="none" stroke="#0f4c97" stroke-width="1.500" /></svg></div>
            <div class="panelctl"><span>◂</span><span>▸</span><span>▾</span><span>✕</span></div>
          </div>
          <div class="viewport">
            ${this.renderModel()}
            <div class="panelfoot"></div>
            <div class="treetab"><svg width="7" height="7" viewBox="0 0 7 7"><path d="M0 0h7v7H0z" fill="#3f7fc4" /></svg>ア</div>
            <div class="exp"></div>
            <div class="exp"></div>
            <div class="exp"></div>
            <div class="treerow r1"></div>
            <div class="treerow r2">
              <svg width="7" height="7" viewBox="0 0 7 7"><circle cx="3.500" cy="3.500" r="3.500" fill="#2a6fb5" /><path d="M3.500 2v3" stroke="#fff" /></svg>
              <svg width="7" height="7" viewBox="0 0 7 7"><path d="M0 0h3v4h4v3H0z" fill="#2a6fb5" /></svg>
              <span>パーツコピー1</span>
            </div>
          </div>
          <div class="prompt">
            <div class="plabel"><span class="kbd"></span>プロンプトバー</div>
            <div class="pinput">
              <span>選択したパーツコピーをベースフィーチャまたは作図補助要素として挿入します。</span>
              <span class="copy">Copyright(C)2018INTER MESH JAPAN CO.,LTD. All Rights Reserved.</span>
              <div class="pctl">
                <span style="width:13px">${icon("updown", 10)}</span>
                <span style="width:12px">${icon("txB", 11)}</span>
                <span style="width:9px">${icon("txC", 10)}</span>
                <span>≈</span><span>▼</span><span>↓</span>
                <span style="font-size:9px;font-weight:700">✕</span>
              </div>
            </div>
          </div>
        </div>
        <div class="rrail">
          ${icon("help", 14)}${icon("yt", 14)}${icon("fbk", 14)}${icon("comm", 14)}
          <div class="vtext">Solid Edgeコミュニティ</div>
        </div>
      </div>
      <div class="status">
        <span class="smsg">0個のアイテムが選択されました。</span>
        <span class="search">コマンドを検索</span>
        <div class="sicons">
          ${icon("rarrow")}${icon("view")}${icon("zoom")}${icon("tgt")}${icon("gear")}${icon("spin")}${icon("hParts")}${icon("flag")}${icon("docs")}${icon("minus")}${icon("slider")}
          <div class="sline"></div>
        </div>
        <div class="task"><span>JP</span><span class="reddot"></span><span>あ</span><span>般</span><span class="tray"></span><span class="tray"></span></div>
      </div>

      <div class="tip">
        <div class="tiphead">
          <svg width="20" height="24" viewBox="0 0 20 24"><path d="M1 6l9-3v15l-9 3z" fill="#5f9ad8" /><path d="M10 3l2 1v15l-2-1z" fill="#2a5fa8" /><rect x="9" y="9" width="8" height="12" rx="4" fill="#d9a326" stroke="#6b5a10" stroke-width=".6" /><path d="M13 10v5M9 15h8" stroke="#6b5a10" stroke-width=".6" /><path d="M11 4c2-3 5-2 6 1" fill="none" stroke="#345" /></svg>
          <span>パーツをコピー</span>
        </div>
        <p style="margin:0">選択したパーツコピーをベースフィーチャまたは</p>
        <p style="margin-bottom:3px">作図補助要素として挿入します。</p>
        <p>F1を押してヘルプを表示します。</p>
      </div>

      <div class="hl"></div>
      <svg class="cursor" width="10" height="15" viewBox="0 0 10 15"><path d="M1 1l8 8H5.500l2 4-2 1-2-4L1 12z" fill="#fff" stroke="#223" stroke-width=".8" /></svg>

      <svg class="arrow" width="275" height="130" viewBox="130 40 275 130">
        <path d="M140 95L192 47L182 72L396 100L387 158L173 126L176 159Z" fill="#c40a0a" />
        <path d="M152 96L185 60L177 79L389 106L381 151L168 119L171 146Z" fill="#f09a92" />
        <text x="185" y="110" transform="rotate(6.500 185 110)">[パーツをコピー]コマンド</text>
      </svg>
    </div>`;
  }
}
